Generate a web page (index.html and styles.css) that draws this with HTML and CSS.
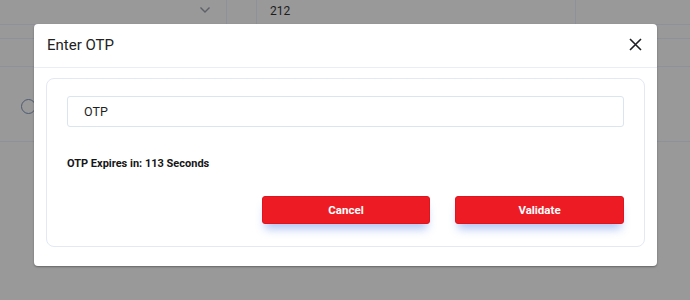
FILE: index.html
```html
<!DOCTYPE html>
<html>
<head>
<meta charset="utf-8">
<link rel="stylesheet" href="styles.css">
</head>
<body>
<div class="page">
  <div class="bg-row top-row">
    <div class="cell c1"><svg class="chev" width="12" height="8" viewBox="0 0 12 8"><path d="M1.5 1.5 L6 6 L10.5 1.5" fill="none" stroke="#5d6068" stroke-width="1.4"/></svg></div>
    <div class="cell c2"></div>
    <div class="cell c3">212</div>
    <div class="cell c4"></div>
  </div>
  <div class="bg-left">
    <div class="bl-row"></div>
    <div class="bl-row b2"></div>
    <div class="bl-row b3"><span class="radio"></span></div>
  </div>
</div>

<div class="overlay">
  <div class="modal">
    <div class="modal-header">
      <span class="modal-title">Enter OTP</span>
      <svg class="close" width="13" height="13" viewBox="0 0 13 13"><path d="M1 1 L12 12 M12 1 L1 12" stroke="#1e1e24" stroke-width="1.6" fill="none"/></svg>
    </div>
    <div class="modal-body">
      <div class="card">
        <div class="input">OTP</div>
        <div class="expires">OTP Expires in: 113 Seconds</div>
        <div class="actions">
          <button class="btn">Cancel</button>
          <button class="btn">Validate</button>
        </div>
      </div>
    </div>
  </div>
</div>
</body>
</html>
```
FILE: styles.css
```css
* { box-sizing: border-box; }
html, body {
  margin: 0;
  padding: 0;
  width: 690px;
  height: 300px;
  overflow: hidden;
  background: #999999;
  font-family: Roboto, "Noto Sans", sans-serif;
}
.page {
  width: 690px;
  height: 300px;
}
.top-row {
  display: flex;
  height: 25px;
  border-bottom: 1px solid #8e9199;
}
.cell {
  height: 24px;
  display: flex;
  align-items: center;
  font-size: 12px;
  color: #1d1d1d;
}
.c1 { width: 227px; justify-content: flex-end; padding-right: 15px; border-right: 1px solid #8e9199; }
.chev { margin-top: -4px; }
.c2 { width: 30px; border-right: 1px solid #8e9199; }
.c3 { width: 319px; padding-left: 13px; border-right: 1px solid #8e9199; padding-bottom: 2px; }
.c4 { flex: 1; }
.bg-left {
  width: 100%;
}
.bl-row {
  height: 14px;
  border-bottom: 1px solid #8e9199;
}
.bl-row.b2 { height: 28px; }
.bl-row.b3 {
  height: 75px;
  display: flex;
  align-items: flex-start;
  padding-left: 21px;
  padding-top: 32px;
  border-bottom: 1px solid #8e9199;
}
.radio {
  width: 15px;
  height: 15px;
  border: 1.5px solid #4c5a72;
  border-radius: 50%;
}
.overlay {
  position: absolute;
  left: 0;
  top: 0;
  width: 690px;
  height: 300px;
}
.modal {
  position: absolute;
  left: 34px;
  top: 24px;
  width: 623px;
  height: 242px;
  background: #fff;
  border-radius: 4px;
  box-shadow: 0 1px 2px rgba(0,0,0,0.35);
  display: flex;
  flex-direction: column;
}
.modal-header {
  height: 44px;
  display: flex;
  align-items: center;
  justify-content: space-between;
  padding: 0 15px 2px 13px;
  border-bottom: 1px solid #e9eef6;
}
.modal-title {
  font-size: 15px;
  color: #222;
}
.modal-body {
  padding: 10px 12px 19px 12px;
  flex: 1;
  display: flex;
}
.card {
  flex: 1;
  border: 1px solid #e2e8f4;
  border-radius: 8px;
  background: #fff;
  padding: 17px 20px 0 20px;
  display: flex;
  flex-direction: column;
}
.input {
  height: 31px;
  border: 1px solid #dbe5f0;
  border-radius: 3px;
  padding-left: 16px;
  display: flex;
  align-items: center;
  font-size: 12.5px;
  color: #1f1f1f;
}
.expires {
  margin-top: 30px;
  font-size: 11px;
  font-weight: 700;
  color: #161616;
}
.actions {
  margin-top: 26px;
  display: flex;
  justify-content: flex-end;
  gap: 25px;
}
.btn {
  width: 168px;
  height: 28px;
  border: 1px solid #e0141c;
  border-radius: 3px;
  background: #ed1c24;
  color: #fff;
  font-family: Roboto, "Noto Sans", sans-serif;
  font-size: 11.5px;
  font-weight: 700;
  box-shadow: 0 8px 10px -3px rgba(60,110,230,0.4);
  padding: 0;
}
.btn + .btn { width: 169px; }
```
